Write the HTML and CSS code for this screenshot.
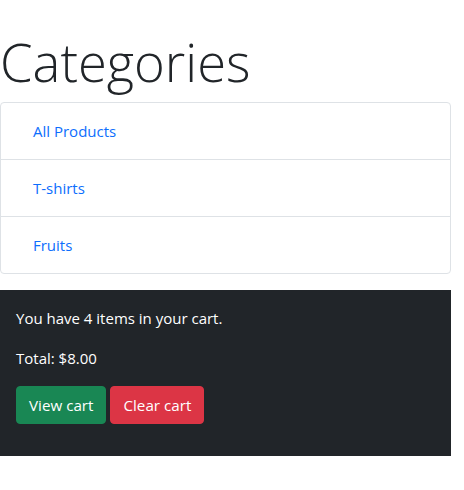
FILE: index.html
```html
<!DOCTYPE html>
<html lang="en">
<head>
<meta charset="utf-8">
<title>Categories</title>
<link rel="stylesheet" href="styles.css">
</head>
<body>
<div class="page">
  <h1 class="title">Categories</h1>
  <ul class="cats">
    <li class="cat"><a class="cat-link" href="#">All Products</a></li>
    <li class="cat"><a class="cat-link" href="#">T-shirts</a></li>
    <li class="cat"><a class="cat-link" href="#">Fruits</a></li>
  </ul>
  <section class="cart">
    <p class="cart-line">You have 4 items in your cart.</p>
    <p class="cart-line">Total: $8.00</p>
    <div class="actions">
      <button class="btn btn-green" type="button">View cart</button>
      <button class="btn btn-red" type="button">Clear cart</button>
    </div>
  </section>
</div>
</body>
</html>
```
FILE: styles.css
```css
* { box-sizing: border-box; }
html, body { margin: 0; padding: 0; background: #fff; }
body {
  font-family: "Open Sans", "Noto Sans", sans-serif;
  font-size: 15px;
  line-height: 24px;
  color: #212529;
}
.page { width: 451px; padding-top: 30px; }
.title {
  margin: 0 0 8px 0;
  font-weight: 300;
  font-size: 52.5px;
  line-height: 64px;
}
.cats {
  list-style: none;
  margin: 0;
  padding: 0;
  border: 1px solid #dee2e6;
  border-radius: 4px;
}
.cat { padding: 16px 16px; }
.cat + .cat { border-top: 1px solid #dee2e6; }
.cat-link {
  display: block;
  padding: 0 16px;
  color: #0d6efd;
  text-decoration: none;
}
.cart {
  margin-top: 16px;
  background: #212529;
  color: #fff;
  padding: 16px 16px 32px;
}
.cart-line { margin: 0 0 16px 0; }
.actions { display: flex; gap: 4px; }
.btn {
  font: inherit;
  font-size: 15.2px;
  color: #fff;
  border: 1px solid transparent;
  border-radius: 4px;
  padding: 6px 12px;
  line-height: 24px;
}
.btn-green { background: #198754; border-color: #198754; }
.btn-red { background: #dc3545; border-color: #dc3545; }
```
